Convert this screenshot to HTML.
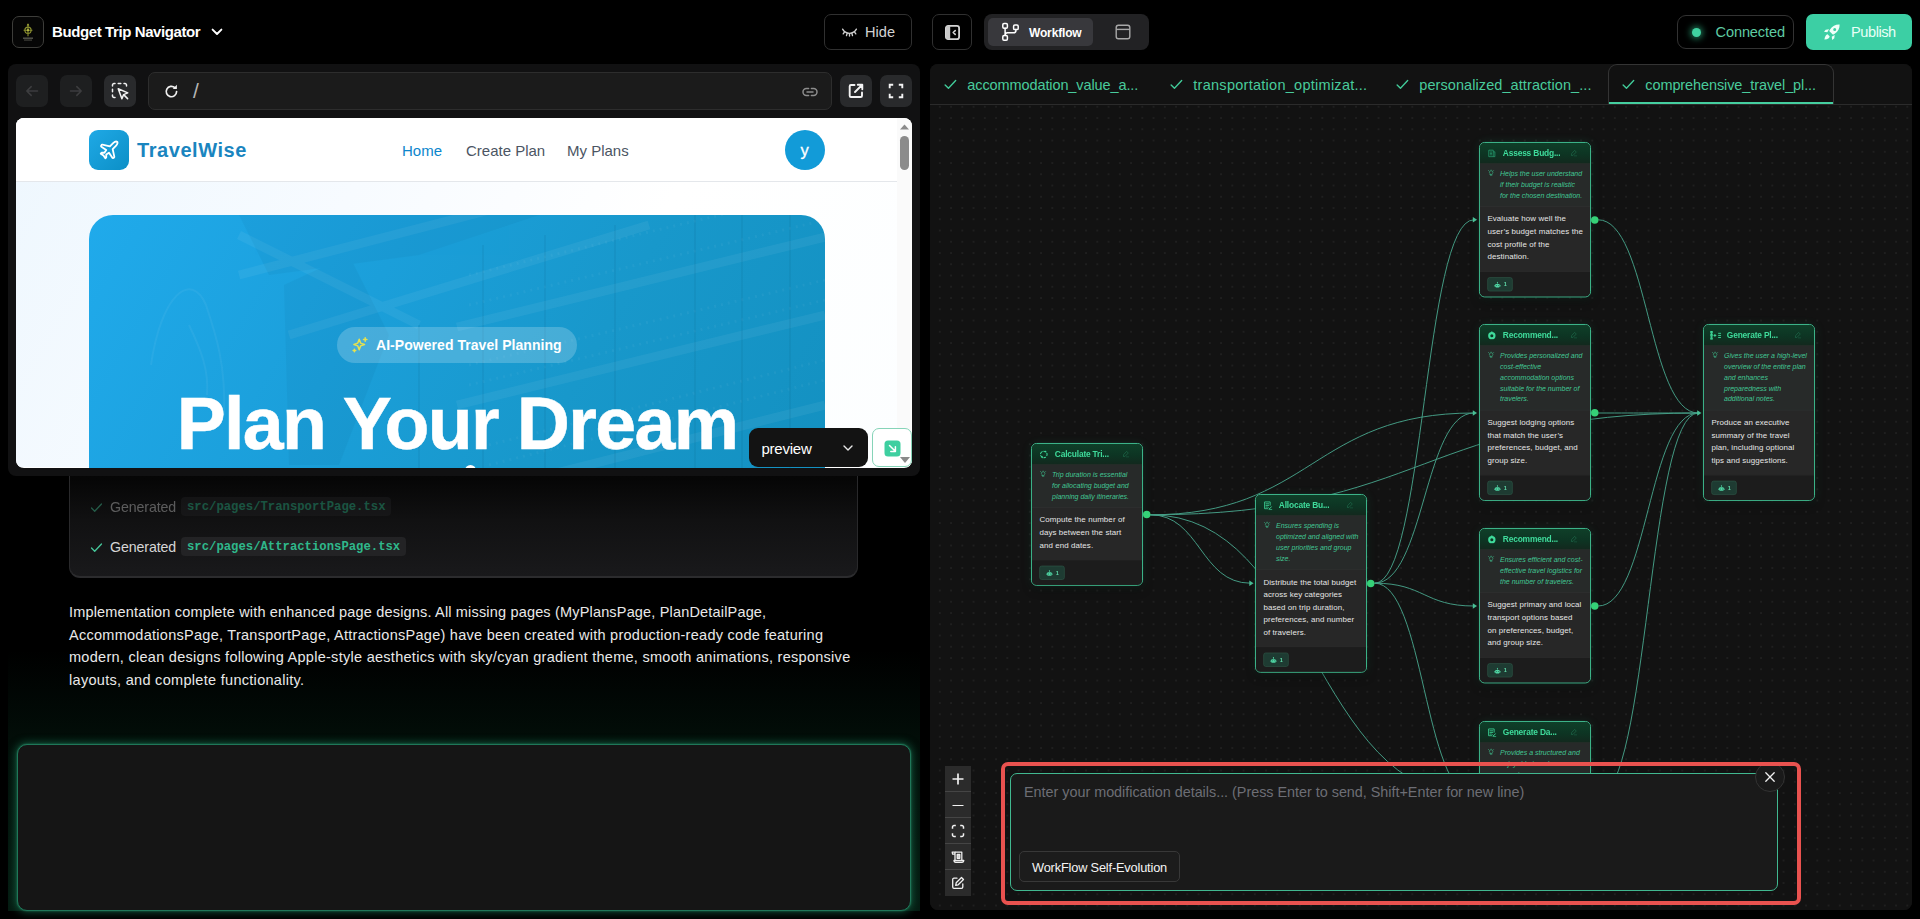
<!DOCTYPE html>
<html lang="en">
<head>
<meta charset="utf-8">
<title>Budget Trip Navigator</title>
<style>
*{box-sizing:border-box;margin:0;padding:0}
html,body{width:1920px;height:919px;overflow:hidden;background:#000;color:#fff;font-family:"Liberation Sans",sans-serif;}
body{position:relative}
.abs{position:absolute}
svg{display:block}
/* ---------- top bar ---------- */
.logo{left:12px;top:16px;width:32px;height:32px;border:1px solid #3d3d3a;border-radius:7px;background:#060606}
.title{left:52px;top:23px;font-size:15px;font-weight:700;line-height:17px;letter-spacing:-0.4px;color:#fff;white-space:nowrap}
.btn-o{border:1px solid #303030;border-radius:7px;background:#000}
.hide{left:824px;top:14px;width:88px;height:36px}
.hide span{position:absolute;left:40px;top:9px;font-size:14.6px;line-height:17px;color:#d2d2d2}
.toggle{left:932px;top:14px;width:40px;height:36px}
.seg{left:984px;top:14px;width:165px;height:36px;background:#222224;border-radius:8px}
.seg .act{position:absolute;left:4px;top:4px;width:105px;height:28px;background:#38383c;border-radius:5px}
.seg .act span{position:absolute;left:41px;top:7.700px;font-size:12px;font-weight:700;line-height:14px;color:#fff;letter-spacing:-0.16px}
.conn{left:1677px;top:15px;width:117px;height:34px;border:1px solid #323232;border-radius:9px;background:#000}
.conn i{position:absolute;left:14px;top:12px;width:9px;height:9px;border-radius:50%;background:#3fd2a0;box-shadow:0 0 6px 2px rgba(52,211,153,.55)}
.conn span{position:absolute;left:37.500px;top:8px;font-size:14.6px;line-height:17px;color:#5ecba3;letter-spacing:-.13px}
.pub{left:1806px;top:14px;width:106px;height:36px;border-radius:7px;background:#3ccfa4}
.pub span{position:absolute;left:45px;top:10px;font-size:14.6px;line-height:17px;color:#e9fff7;letter-spacing:-.44px}
/* ---------- left preview panel ---------- */
.lp{left:8px;top:64px;width:912px;height:412px;background:#111112;border-radius:8px;z-index:5}
.tb{top:11px;width:32px;height:32px;border-radius:7px;background:#1e1f20}
.tb.l{background:#292a2c}
.url{left:140px;top:8px;width:684px;height:38px;border:1px solid #2d2d2d;border-radius:7px;background:#1b1b1b}
.url span{position:absolute;left:44px;top:6px;font-size:21px;line-height:24px;color:#b4b4b4}
.frame{left:8px;top:54px;width:896px;height:349.500px;border-radius:8px;background:#fff;overflow:hidden}
/* ---------- chat area ---------- */
.chat{left:8px;top:476px;width:912px;height:435px;background:linear-gradient(180deg,#000 0%,#000 40%,#020d08 60%,#051c12 100%)}

/* ---------- site in frame ---------- */
.site{position:absolute;left:0;top:0;width:881px;height:349px;background:linear-gradient(120deg,#eef7fe 0%,#f7fbff 35%,#ffffff 65%,#fcfeff 100%);font-family:"Liberation Sans",sans-serif}
.nav{position:absolute;left:0;top:0;width:881px;height:64px;background:#fff;border-bottom:1px solid #e4e7eb}
.lg{position:absolute;left:72.500px;top:12px;width:40px;height:40px;border-radius:9px;background:linear-gradient(135deg,#1fa9e6,#0c8fc6)}
.brand{position:absolute;left:121px;top:21px;font-size:20px;font-weight:700;line-height:23px;letter-spacing:.56px;color:#1a85bf;white-space:nowrap}
.nl{position:absolute;top:23.500px;font-size:15px;line-height:17px;color:#4b5563;white-space:nowrap}
.av{position:absolute;left:768.500px;top:12px;width:40px;height:40px;border-radius:50%;background:#129bd8;color:#fff;font-weight:400;font-size:16.500px;line-height:40px;text-align:center;-webkit-text-stroke:.3px #fff}
.hero{position:absolute;left:73px;top:97px;width:736px;height:300px;border-radius:24px;overflow:hidden;background:linear-gradient(120deg,#20aaeb 0%,#1b9fda 36%,#1898cb 64%,#1390c0 100%)}
.pill{position:absolute;left:247.500px;top:112px;width:240.500px;height:36px;border-radius:18px;background:rgba(255,255,255,.2)}
.pill span{position:absolute;left:39.500px;top:10px;font-size:14px;font-weight:700;line-height:16px;color:#fff;white-space:nowrap;letter-spacing:.05px}
.h1{position:absolute;left:0;top:172px;width:736px;text-align:center;font-size:73.500px;font-weight:700;line-height:74px;color:#fff;white-space:nowrap;letter-spacing:-1.650px;-webkit-text-stroke:.5px #fff}
.sb{position:absolute;left:881px;top:0;width:15px;height:349px;background:#fafafa}
.sb i{position:absolute;left:3px;top:18px;width:9px;height:34px;border-radius:4.500px;background:#8b8b8b}
.pv{left:740.500px;top:364px;width:119px;height:39px;border-radius:9px;background:#131313}
.pv span{position:absolute;left:13px;top:11.500px;font-size:15px;line-height:18px;color:#fff;letter-spacing:-.24px}
.gb{left:864px;top:364px;width:40px;height:39px;border-radius:7px;background:#fff;border:1px solid #86d4b8}
/* ---------- chat ---------- */
.card{position:absolute;left:61px;top:-40px;width:789px;height:141.500px;border:1px solid #29292b;border-bottom:2px solid #2c2c2e;border-radius:11px;background:linear-gradient(180deg,#040404 0%,#060606 30%,#111112 60%,#19191b 100%)}
.row{position:absolute;left:20px;height:20px;white-space:nowrap}
.row .g{position:absolute;left:20px;top:1px;font-size:14.200px;line-height:17px;letter-spacing:-.1px}
.row code{position:absolute;left:91px;top:-1px;height:19px;padding:0 6px;border-radius:4px;background:#232325;font-family:"Liberation Mono",monospace;font-weight:700;font-size:12.250px;line-height:21.500px}
.para{position:absolute;left:61px;top:125px;font-size:14.500px;line-height:22.500px;color:#e9e9e9;white-space:nowrap}
.inp{position:absolute;left:8.500px;top:267.500px;width:894.500px;height:167px;border:1.500px solid #1f7759;border-radius:10px;background:#151515;box-shadow:0 0 9px 1px rgba(32,150,105,.55),0 0 2px rgba(60,200,150,.5)}
/* ---------- right panel ---------- */
.rp{left:930px;top:64px;width:982px;height:846px;background:#121212;border-radius:8px;overflow:hidden}
/* RPCSS-START */
.tabs{position:absolute;left:0;top:0;width:982px;height:41px;border-bottom:1px solid #2b2b2b;background:#121212}
.tab{position:absolute;top:0;height:40px;white-space:nowrap}
.tab span{position:absolute;left:37.300px;top:12.500px;font-size:14.500px;line-height:17px;color:#49cb9c;letter-spacing:-.1px}
.tab.on span{left:36.300px;top:11.500px}
.tab.on svg{left:13px;top:14px}
.tab svg{position:absolute;left:14px;top:15px}
.tab.on{border:1px solid #343434;border-bottom:0;border-radius:9px 9px 0 0;background:#111}
.tab.on:after{content:"";position:absolute;left:0;right:0;bottom:0;height:2.500px;background:#45cfa0}
.cv{position:absolute;left:0;top:41px;width:982px;height:805px;overflow:hidden;background-color:#121212;background-image:radial-gradient(circle,#1f1f1f 0.700px,rgba(31,31,31,0) 1.200px);background-size:11.250px 11.250px;background-position:4.200px 7.400px}
.nd{position:absolute;width:240px;transform-origin:0 0;transform:scale(0.4667);border:2px solid #41c596;border-radius:12px;background:#262626;box-shadow:0 0 18px rgba(61,207,155,.11),0 8px 20px rgba(0,0,0,.3);font-family:"Liberation Sans",sans-serif}
.nd .in{border-radius:10px;overflow:hidden}
.nh{position:relative;height:44px;background:linear-gradient(180deg,#0f3f29 0%,#0d3523 55%,#12291e 100%);border-bottom:1px solid #1d3a2c}
.nh b{position:absolute;left:49px;top:11px;font-size:18px;line-height:22px;font-weight:700;color:#3fdb9b;white-space:nowrap;letter-spacing:-.4px}
.nh svg.ic{position:absolute;left:16px;top:13px}
.nh svg.ed{position:absolute;left:194px;top:14px;opacity:.5}
.nr{position:relative;padding:10px 12px 11.700px 43px;background:#272a29;border-bottom:1px solid #343535;font-style:italic;font-size:15px;line-height:23.300px;color:#42c794;white-space:nowrap;letter-spacing:0}
.nr svg{position:absolute;left:17px;top:13px}
.nb{padding:12.700px 16px 17.300px 16px;background:#272727;font-size:17px;line-height:27px;color:#e6e6e6;white-space:nowrap;letter-spacing:.2px}
.nf{height:54px;background:#1c1c1c;border-top:1px solid #343434;position:relative}
.bd{position:absolute;left:16px;top:12px;width:54px;height:30px;border:1.500px solid #346553;border-radius:5px;background:#1e3b32}
.bd svg{position:absolute;left:13px;top:8px}
.bd span{position:absolute;left:34px;top:7px;font-size:12px;font-weight:700;line-height:14px;color:#5fd8a8}
.hd{position:absolute;right:-17.500px;width:16px;height:16px;border-radius:50%;background:#35d177}
.ctl{position:absolute;left:15.200px;top:661.300px;width:26px;background:#2b2b2b}
.ctl div{height:26px;border-bottom:1px solid #454545;position:relative}
.ctl div:last-child{border-bottom:0}
.ctl svg{position:absolute;left:6px;top:6px}
.hl{position:absolute;left:70.500px;top:698px;width:800.500px;height:142.500px;border:4.500px solid #e9524f;border-radius:7px}
.ta{position:absolute;left:80px;top:709px;width:768.300px;height:118px;border:1px solid #41b890;border-radius:7px;background:#1a1a1a}
.ta .ph{position:absolute;left:13px;top:10px;font-size:14.400px;line-height:17px;color:#6d6e75;white-space:nowrap;letter-spacing:-.02px}
.ta .wb{position:absolute;left:7.500px;top:76.500px;width:161.500px;height:31.500px;border:1px solid #383838;border-radius:5px;background:#1c1c1c}
.ta .wb span{position:absolute;left:12.500px;top:8px;font-size:12.800px;line-height:15px;color:#f4f4f4;white-space:nowrap;letter-spacing:-.18px}
.hl{z-index:3}
.cl{position:absolute;left:824.500px;top:698.200px;width:30px;height:30px;border-radius:50%;background:#1a1a1a;border:1px solid #333}
/* RPCSS-END */
</style>
</head>
<body>
<!-- TOPBAR -->
<div class="abs logo" id="logo"><svg width="30" height="30" viewBox="0 0 30 30" style="position:absolute;left:0;top:0">
<g fill="none" stroke="#8d9230" stroke-width="1.1"><circle cx="15" cy="13.2" r="3.1"/><path d="M15 7.2v12M10.6 13.2h8.8"/></g>
<path d="M15 6.2l1.3 2.4h-2.6z" fill="#a9ad3a"/><circle cx="15" cy="13.2" r="1.1" fill="#b9bd45"/>
<rect x="10" y="20.6" width="10" height="1.1" fill="#6d6d62"/><rect x="11" y="22.6" width="8" height="0.9" fill="#55554c"/></svg></div>
<div class="abs title">Budget Trip Navigator</div>
<svg class="abs" style="left:211px;top:26px" width="12" height="12" viewBox="0 0 12 12"><path d="M1.6 3.6L6 8l4.4-4.4" fill="none" stroke="#fff" stroke-width="1.9" stroke-linecap="round" stroke-linejoin="round"/></svg>
<div class="abs btn-o hide"><svg style="position:absolute;left:16px;top:11px" width="17" height="14" viewBox="0 0 17 14"><g fill="none" stroke="#d0d0d0" stroke-width="1.35" stroke-linecap="round"><path d="M1.6 3.2C3.2 6 5.6 7.3 8.5 7.3s5.3-1.3 6.9-4.1"/><path d="M3.4 6.1L2.2 7.9M6.1 7.5l-.6 2.1M10.9 7.5l.6 2.1M13.6 6.1l1.2 1.8M8.5 7.8v2.2"/></g></svg><span>Hide</span></div>
<div class="abs btn-o toggle"><svg style="position:absolute;left:11px;top:9px" width="17" height="17" viewBox="0 0 17 17"><rect x="1.9" y="1.9" width="13.2" height="13.2" rx="2.2" fill="none" stroke="#d4d4d4" stroke-width="1.8"/><path d="M2 3.5a1.6 1.6 0 0 1 1.6-1.6H6.2v13.2H3.6A1.6 1.6 0 0 1 2 13.5z" fill="#c9c9c9"/><path d="M11.2 6.6L9.2 8.5l2 1.9" fill="none" stroke="#d4d4d4" stroke-width="1.6" stroke-linecap="round" stroke-linejoin="round"/></svg></div>
<div class="abs seg"><div class="act"><svg style="position:absolute;left:13px;top:4px" width="20" height="20" viewBox="0 0 20 20"><g fill="none" stroke="#fff" stroke-width="1.5" stroke-linejoin="round"><rect x="1.8" y="1.6" width="4.6" height="4.6" rx="1.2"/><rect x="1.8" y="13.6" width="4.6" height="4.6" rx="1.2"/><rect x="12.6" y="3" width="4.6" height="4.6" rx="1.2"/><path d="M4.1 6.2v7.4M14.9 7.6v.8a2.4 2.4 0 0 1-2.4 2.4H6.5a2.4 2.4 0 0 0-2.4 2.4" stroke-linecap="round"/></g></svg><span>Workflow</span></div>
<svg style="position:absolute;left:130px;top:9px" width="18" height="18" viewBox="0 0 18 18"><g fill="none" stroke="#a8a8a8" stroke-width="1.4"><rect x="2.2" y="2.2" width="13.6" height="13.6" rx="2.2"/><path d="M2.2 6.4h13.6"/></g></svg></div>
<div class="abs conn"><i></i><span>Connected</span></div>
<div class="abs pub"><svg style="position:absolute;left:17px;top:9px" width="18" height="18" viewBox="0 0 18 18"><g fill="#effff9"><path d="M16.6 1.4c-3.9-.2-7.3 1.5-9.4 4.9l-1 1.7 3.8 3.8 1.7-1c3.4-2.1 5.1-5.500 4.900-9.400zM11.700 7.900a1.500 1.500 0 1 1 0-3 1.500 1.500 0 0 1 0 3z"/><path d="M6.100 6.300L2.700 6.700 1 8.800l3.300.5zM11.700 11.900l-.4 3.400-2.100 1.700-.5-3.300z"/><path d="M4.600 11.300c-1.500.3-2.600 1.600-3.200 5.300 3.700-.6 5-1.700 5.300-3.200z"/></g></svg><span>Publish</span></div>

<!-- CHAT (behind) -->
<div class="abs chat" id="chat">
  <div class="card">
    <div class="row" style="top:61px;opacity:.42"><svg style="position:absolute;left:0;top:3px" width="13" height="13" viewBox="0 0 13 13"><path d="M1.500 7l3.200 3.200L11.500 3" fill="none" stroke="#46c79a" stroke-width="1.300" stroke-linecap="round" stroke-linejoin="round"/></svg><span class="g" style="color:#c9c9c9">Generated</span><code style="color:#2fb88b">src/pages/TransportPage.tsx</code></div>
    <div class="row" style="top:101px"><svg style="position:absolute;left:0;top:3px" width="13" height="13" viewBox="0 0 13 13"><path d="M1.500 7l3.200 3.200L11.500 3" fill="none" stroke="#46c79a" stroke-width="1.300" stroke-linecap="round" stroke-linejoin="round"/></svg><span class="g" style="color:#d6d6d6">Generated</span><code style="color:#2fb88b">src/pages/AttractionsPage.tsx</code></div>
  </div>
  <div class="para"><span style="letter-spacing:.172px">Implementation complete with enhanced page designs. All missing pages (MyPlansPage, PlanDetailPage,</span><br><span style="letter-spacing:.272px">AccommodationsPage, TransportPage, AttractionsPage) have been created with production-ready code featuring</span><br><span style="letter-spacing:.28px">modern, clean designs following Apple-style aesthetics with sky/cyan gradient theme, smooth animations, responsive</span><br><span style="letter-spacing:.3px">layouts, and complete functionality.</span></div>
  <div class="inp"></div>
</div>

<!-- LEFT PREVIEW PANEL -->
<div class="abs lp" id="lp">
  <div class="abs tb" style="left:8px"><svg style="position:absolute;left:8px;top:8px" width="16" height="16" viewBox="0 0 16 16"><path d="M13.500 8H3M7.200 3.600L2.800 8l4.400 4.400" fill="none" stroke="#3d3d3f" stroke-width="1.5" stroke-linecap="round" stroke-linejoin="round"/></svg></div>
  <div class="abs tb" style="left:52px"><svg style="position:absolute;left:8px;top:8px" width="16" height="16" viewBox="0 0 16 16"><path d="M2.500 8H13M8.800 3.600L13.200 8l-4.400 4.400" fill="none" stroke="#3d3d3f" stroke-width="1.500" stroke-linecap="round" stroke-linejoin="round"/></svg></div>
  <div class="abs tb l" style="left:96px"><svg style="position:absolute;left:7px;top:7px" width="19" height="19" viewBox="0 0 19 19"><g fill="none" stroke="#f2f2f2" stroke-width="1.5" stroke-linecap="round" stroke-linejoin="round"><path d="M4 1.500H3a1.500 1.500 0 0 0-1.500 1.500v1M7.200 1.500h2.600M13 1.500h1a1.500 1.500 0 0 1 1.500 1.500v1M1.500 7.200v2.600M1.500 13v1a1.500 1.500 0 0 0 1.500 1.500h1"/><path d="M7.200 6.800l3.700 10 1.700-4.200 4.200-1.700z"/><path d="M12.900 12.900l3.700 3.700"/></g></svg></div>
  <div class="abs url"><svg style="position:absolute;left:14px;top:10px" width="17" height="17" viewBox="0 0 17 17"><g fill="none" stroke="#f0f0f0" stroke-width="1.700" stroke-linecap="round" stroke-linejoin="round"><path d="M13.600 8.600a5.200 5.200 0 1 1-1.700-3.900"/></g><path d="M13.900 1.800v4.200H9.700z" fill="#f0f0f0"/></svg><span>/</span>
<svg style="position:absolute;left:652px;top:10px" width="18" height="18" viewBox="0 0 18 18"><g fill="none" stroke="#8d8d8d" stroke-width="1.500" stroke-linecap="round"><path d="M7.600 12.400H5.400a3.400 3.400 0 0 1 0-6.800h2.200M10.400 5.600h2.200a3.400 3.400 0 0 1 0 6.800h-2.200M6 9h6"/></g></svg></div>
  <div class="abs tb l" style="left:832px"><svg style="position:absolute;left:7px;top:7px" width="18" height="18" viewBox="0 0 18 18"><g fill="none" stroke="#f4f4f4" stroke-width="1.9" stroke-linecap="round" stroke-linejoin="round"><path d="M7.500 3H4a1.300 1.300 0 0 0-1.300 1.300v9.400A1.300 1.300 0 0 0 4 15h9.700a1.300 1.300 0 0 0 1.300-1.300V10.500"/><path d="M10.800 2.700h4.500v4.500M15 3L8 10"/></g></svg></div>
  <div class="abs tb l" style="left:872px"><svg style="position:absolute;left:8px;top:8px" width="16" height="16" viewBox="0 0 16 16"><path d="M1.700 5.200V1.700h3.500M10.800 1.700h3.500v3.500M14.300 10.800v3.500h-3.500M5.200 14.300H1.700v-3.500" fill="none" stroke="#f4f4f4" stroke-width="1.900" stroke-linejoin="miter"/></svg></div>
  <div class="abs frame" id="frame">
    <div class="site">
      <div class="hero">
        <svg width="736" height="300" viewBox="0 0 736 300" style="position:absolute;left:0;top:0">
          <g stroke="#fff" fill="none" opacity=".055" stroke-width="9"><path d="M150 60L420 -10M200 120L560 10M368 112L736 22M368 190L736 100M420 270L736 190M150 20L330 110"/></g>
          <g stroke="#fff" fill="none" opacity=".045" stroke-width="3" stroke-dasharray="2 5"><path d="M380 60L736 -25M380 90L736 5M380 150L736 65M380 170L736 85M400 230L736 145M400 250L736 165"/></g>
          <g stroke="#05405f" fill="none" opacity=".09" stroke-width="1.500"><path d="M394 30V300M456 20V300M526 10V300M606 0V300M653 0V300M701 0V300M330 110V300"/></g>
          <g fill="#05405f" opacity=".05"><path d="M195 70L260 40L300 120L250 250H200z"/><path d="M150 0h300L330 40L180 60z"/></g>
          <g stroke="#fff" fill="none" opacity=".05" stroke-width="2"><path d="M62 150c10-70 40-95 55-60c10 30 20 60 18 110M100 110c12 25 20 45 18 70"/></g>
        </svg>
        <div class="pill"><svg style="position:absolute;left:14px;top:9px" width="18" height="18" viewBox="0 0 18 18"><g fill="none" stroke="#e6e14f" stroke-width="1.500" stroke-linejoin="round" stroke-linecap="round"><path d="M8.200 3.200l1.400 3.900 3.900 1.400-3.900 1.400-1.400 3.900-1.400-3.900L2.900 8.500l3.900-1.400z"/><path d="M14.200 1.800v3.400M12.500 3.500h3.400M3.400 13.200v2.600M2.100 14.500h2.600"/></g></svg><span>AI-Powered Travel Planning</span></div>
        <div class="h1">Plan Your Dream</div>
        <i style="position:absolute;left:376px;top:250px;width:11px;height:11px;border-radius:50%;background:#fff"></i>
      </div>
      <div class="nav">
        <div class="lg"><svg style="position:absolute;left:9px;top:9px" width="22" height="22" viewBox="0 0 24 24"><path d="M17.800 19.200L16 11l3.500-3.500C21 6 21.500 4 21 3c-1-.5-3 0-4.500 1.500L13 8 4.800 6.200c-.5-.1-.9.100-1.100.5l-.3.500c-.2.500-.1 1 .3 1.300L9 12l-2 3H4l-1 1 3 2 2 3 1-1v-3l3-2 3.500 5.300c.3.400.8.500 1.300.3l.5-.2c.4-.300.600-.700.500-1.200z" fill="none" stroke="#fff" stroke-width="2" stroke-linejoin="round" stroke-linecap="round"/></svg></div>
        <div class="brand">TravelWise</div>
        <div class="nl" style="left:386px;color:#0c86cc">Home</div>
        <div class="nl" style="left:450px">Create Plan</div>
        <div class="nl" style="left:551px">My Plans</div>
        <div class="av">y</div>
      </div>
    </div>
    <div class="sb"><svg style="position:absolute;left:3px;top:5.500px" width="9" height="6" viewBox="0 0 9 6"><path d="M0 5.500L4.500.5 9 5.500z" fill="#8a8a8a"/></svg><i></i></div>
  </div>
  <div class="abs pv"><span>preview</span><svg style="position:absolute;left:93px;top:14px" width="12" height="12" viewBox="0 0 12 12"><path d="M2 4l4 4 4-4" fill="none" stroke="#e8e8e8" stroke-width="1.400" stroke-linecap="round" stroke-linejoin="round"/></svg></div>
  <div class="abs gb"><svg style="position:absolute;left:11px;top:11px" width="17" height="17" viewBox="0 0 17 17"><rect x=".500" y=".500" width="16" height="16" rx="3.500" fill="#3ecfa0"/><path d="M5.500 5.500l5.800 5.800M11.400 6.800v4.600H6.800" fill="none" stroke="#fff" stroke-width="1.500" stroke-linecap="round" stroke-linejoin="round"/></svg><svg style="position:absolute;left:27px;top:28px" width="10" height="6" viewBox="0 0 10 6"><path d="M0 0h10L5 6z" fill="#8a8a8a"/></svg></div>
</div>

<!-- RIGHT PANEL -->
<!-- RP-START -->
<div class="abs rp" id="rp">
<div class="tabs">
<div class="tab" style="left:0px;width:226px"><svg width="13" height="11.100" viewBox="0 0 14 12"><path d="M1.200 6.400l3.600 3.600L12.600 1.700" fill="none" stroke="#41c998" stroke-width="1.500" stroke-linecap="round" stroke-linejoin="round"/></svg><span style="letter-spacing:-0.1px">accommodation_value_a...</span></div>
<div class="tab" style="left:226px;width:226px"><svg width="13" height="11.100" viewBox="0 0 14 12"><path d="M1.200 6.400l3.600 3.600L12.600 1.700" fill="none" stroke="#41c998" stroke-width="1.500" stroke-linecap="round" stroke-linejoin="round"/></svg><span style="letter-spacing:0.27px">transportation_optimizat...</span></div>
<div class="tab" style="left:452px;width:226px"><svg width="13" height="11.100" viewBox="0 0 14 12"><path d="M1.200 6.400l3.600 3.600L12.600 1.700" fill="none" stroke="#41c998" stroke-width="1.500" stroke-linecap="round" stroke-linejoin="round"/></svg><span style="letter-spacing:0.08px">personalized_attraction_...</span></div>
<div class="tab on" style="left:678px;width:226px"><svg width="13" height="11.100" viewBox="0 0 14 12"><path d="M1.200 6.400l3.600 3.600L12.600 1.700" fill="none" stroke="#41c998" stroke-width="1.500" stroke-linecap="round" stroke-linejoin="round"/></svg><span style="letter-spacing:-0.1px">comprehensive_travel_pl...</span></div>
</div>
<div class="cv"><svg width="982" height="805" viewBox="930 105 982 805" style="position:absolute;left:0;top:0"><g fill="none" stroke="#46a088" stroke-width=".95"><path d="M1150.3 514.8C1200.3 514.8 1200.3 583.2 1250.4 583.2"/><path d="M1150.3 514.8C1312.1 514.8 1312.1 413.0 1473.9 413.0"/><path d="M1150.3 514.8C1424.3 514.8 1424.3 413.0 1698.3 413.0"/><path d="M1150.3 514.8C1312.1 514.8 1312.1 796.0 1473.9 796.0"/><path d="M1374.6 583.2C1424.2 583.2 1424.2 219.8 1473.9 219.8"/><path d="M1374.6 583.2C1424.2 583.2 1424.2 413.0 1473.9 413.0"/><path d="M1374.6 583.2C1424.2 583.2 1424.2 606.0 1473.9 606.0"/><path d="M1374.6 583.2C1424.2 583.2 1424.2 796.0 1473.9 796.0"/><path d="M1598.1 219.8C1648.2 219.8 1648.2 413.0 1698.3 413.0"/><path d="M1598.1 413.0C1648.2 413.0 1648.2 413.0 1698.3 413.0"/><path d="M1598.1 606.0C1648.2 606.0 1648.2 413.0 1698.3 413.0"/><path d="M1598.1 796.0C1648.2 796.0 1648.2 413.0 1698.3 413.0"/></g><g fill="#4cc79c"><path d="M1253.6 583.2l-4.300 -2.700v5.400z"/><path d="M1477.1 413.0l-4.300 -2.700v5.400z"/><path d="M1701.5 413.0l-4.300 -2.700v5.400z"/><path d="M1477.1 796.0l-4.300 -2.700v5.400z"/><path d="M1477.1 219.8l-4.300 -2.700v5.400z"/><path d="M1477.1 606.0l-4.300 -2.700v5.400z"/></g></svg><div class="nd" style="left:101.1px;top:338.3px"><div class="in"><div class="nh"><svg class="ic" width="19" height="19" viewBox="0 0 19 19"><g fill="none" stroke="#3fdb9b" stroke-width="2.200" stroke-linecap="round"><path d="M9.500 2.500a7 7 0 0 1 3.500 1M16 7a7 7 0 0 1 0 5M13 15.500a7 7 0 0 1-3.500 1M6 15.500a7 7 0 0 1-3-3.500M2.500 8a7 7 0 0 1 3.500-4.500"/></g><path d="M12 1l4 3.500-4.500 1z" fill="#3fdb9b"/><path d="M7 18l-4-3.500 4.500-1z" fill="#3fdb9b"/></svg><b>Calculate Tri...</b><svg class="ed" width="15" height="15" viewBox="0 0 15 15"><g fill="none" stroke="#2f9f73" stroke-width="1.500" stroke-linecap="round" stroke-linejoin="round"><path d="M9.500 2.500l3 3L5.500 12.500l-3.700.7.700-3.700z"/><path d="M8 14h5.500"/></g></svg></div><div class="nr"><svg width="14" height="14" viewBox="0 0 14 14"><g fill="none" stroke="#42c794" stroke-width="1.200" stroke-linecap="round"><path d="M4.800 9.200C3.800 8.500 3.200 7.500 3.200 6.300a3.800 3.800 0 0 1 7.600 0c0 1.200-.6 2.200-1.600 2.900v1.300H4.800zM5.400 12.300h3.200"/><path d="M7 .4v.9M1.300 2l.7.700M12.700 2l-.7.700"/></g></svg>Trip duration is essential<br>for allocating budget and<br>planning daily itineraries.</div><div class="nb">Compute the number of<br>days between the start<br>and end dates.</div><div class="nf"><div class="bd"><svg width="15" height="14" viewBox="0 0 15 14"><g fill="#4fd6a4"><rect x="2.500" y="5" width="10" height="7.500" rx="2.200"/><rect x="6.900" y="1.500" width="1.200" height="3.500"/><circle cx="7.500" cy="1.600" r="1.200"/><rect x=".5" y="7.500" width="1.300" height="3" rx=".6"/><rect x="13.200" y="7.500" width="1.300" height="3" rx=".6"/></g><circle cx="5.600" cy="8.500" r="1" fill="#1e3b32"/><circle cx="9.400" cy="8.500" r="1" fill="#1e3b32"/></svg><span>1</span></div></div></div><i class="hd" style="top:143.3px"></i></div><div class="nd" style="left:325.4px;top:388.6px"><div class="in"><div class="nh"><svg class="ic" width="20" height="20" viewBox="0 0 20 20"><g fill="none" stroke="#3fdb9b" stroke-width="1.700" stroke-linejoin="round" stroke-linecap="round"><path d="M14.500 9V2H2.500v14.500h7"/><path d="M5.500 6h6M5.500 9.500h6M5.500 13h3"/><path d="M11.500 14.500l2 2 3.500-4" stroke-width="2"/><path d="M12 18.500h6" stroke-width="1.500"/></g></svg><b>Allocate Bu...</b><svg class="ed" width="15" height="15" viewBox="0 0 15 15"><g fill="none" stroke="#2f9f73" stroke-width="1.500" stroke-linecap="round" stroke-linejoin="round"><path d="M9.500 2.500l3 3L5.500 12.500l-3.700.7.700-3.700z"/><path d="M8 14h5.500"/></g></svg></div><div class="nr"><svg width="14" height="14" viewBox="0 0 14 14"><g fill="none" stroke="#42c794" stroke-width="1.200" stroke-linecap="round"><path d="M4.800 9.200C3.800 8.500 3.200 7.500 3.200 6.300a3.800 3.800 0 0 1 7.600 0c0 1.200-.6 2.200-1.600 2.900v1.300H4.800zM5.400 12.300h3.200"/><path d="M7 .4v.9M1.300 2l.7.700M12.700 2l-.7.700"/></g></svg>Ensures spending is<br>optimized and aligned with<br>user priorities and group<br>size.</div><div class="nb">Distribute the total budget<br>across key categories<br>based on trip duration,<br>preferences, and number<br>of travelers.</div><div class="nf"><div class="bd"><svg width="15" height="14" viewBox="0 0 15 14"><g fill="#4fd6a4"><rect x="2.500" y="5" width="10" height="7.500" rx="2.200"/><rect x="6.900" y="1.500" width="1.200" height="3.500"/><circle cx="7.500" cy="1.600" r="1.200"/><rect x=".5" y="7.500" width="1.300" height="3" rx=".6"/><rect x="13.200" y="7.500" width="1.300" height="3" rx=".6"/></g><circle cx="5.600" cy="8.500" r="1" fill="#1e3b32"/><circle cx="9.400" cy="8.500" r="1" fill="#1e3b32"/></svg><span>1</span></div></div></div><i class="hd" style="top:181.9px"></i></div><div class="nd" style="left:548.9px;top:37.0px"><div class="in"><div class="nh"><svg class="ic" width="19" height="19" viewBox="0 0 19 19"><g fill="none" stroke="#2aa878" stroke-width="1.500" stroke-linejoin="round"><path d="M3 2.500h9.500v14H3z"/><path d="M12.500 6h3.500v10.500h-3.500M5.500 6.500h4.500M5.500 9.500h4.500M5.500 12.500h4.500"/></g></svg><b>Assess Budg...</b><svg class="ed" width="15" height="15" viewBox="0 0 15 15"><g fill="none" stroke="#2f9f73" stroke-width="1.500" stroke-linecap="round" stroke-linejoin="round"><path d="M9.500 2.500l3 3L5.500 12.500l-3.700.7.700-3.700z"/><path d="M8 14h5.500"/></g></svg></div><div class="nr"><svg width="14" height="14" viewBox="0 0 14 14"><g fill="none" stroke="#42c794" stroke-width="1.200" stroke-linecap="round"><path d="M4.800 9.200C3.800 8.500 3.200 7.500 3.200 6.300a3.800 3.800 0 0 1 7.600 0c0 1.200-.6 2.200-1.600 2.900v1.300H4.800zM5.400 12.300h3.200"/><path d="M7 .4v.9M1.300 2l.7.700M12.700 2l-.7.700"/></g></svg>Helps the user understand<br>if their budget is realistic<br>for the chosen destination.</div><div class="nb">Evaluate how well the<br>user’s budget matches the<br>cost profile of the<br>destination.</div><div class="nf"><div class="bd"><svg width="15" height="14" viewBox="0 0 15 14"><g fill="#4fd6a4"><rect x="2.500" y="5" width="10" height="7.500" rx="2.200"/><rect x="6.900" y="1.500" width="1.200" height="3.500"/><circle cx="7.500" cy="1.600" r="1.200"/><rect x=".5" y="7.500" width="1.300" height="3" rx=".6"/><rect x="13.200" y="7.500" width="1.300" height="3" rx=".6"/></g><circle cx="5.600" cy="8.500" r="1" fill="#1e3b32"/><circle cx="9.400" cy="8.500" r="1" fill="#1e3b32"/></svg><span>1</span></div></div></div><i class="hd" style="top:156.8px"></i></div><div class="nd" style="left:548.9px;top:219.3px"><div class="in"><div class="nh"><svg class="ic" width="19" height="19" viewBox="0 0 19 19"><circle cx="9.500" cy="10" r="5.600" fill="none" stroke="#3fdb9b" stroke-width="4.600"/><rect x="8.300" y=".8" width="2.400" height="3.500" fill="#3fdb9b"/></svg><b>Recommend...</b><svg class="ed" width="15" height="15" viewBox="0 0 15 15"><g fill="none" stroke="#2f9f73" stroke-width="1.500" stroke-linecap="round" stroke-linejoin="round"><path d="M9.500 2.500l3 3L5.500 12.500l-3.700.7.700-3.700z"/><path d="M8 14h5.500"/></g></svg></div><div class="nr"><svg width="14" height="14" viewBox="0 0 14 14"><g fill="none" stroke="#42c794" stroke-width="1.200" stroke-linecap="round"><path d="M4.800 9.200C3.800 8.500 3.200 7.500 3.200 6.300a3.800 3.800 0 0 1 7.600 0c0 1.200-.6 2.200-1.600 2.900v1.300H4.800zM5.400 12.300h3.200"/><path d="M7 .4v.9M1.300 2l.7.700M12.700 2l-.7.700"/></g></svg>Provides personalized and<br>cost-effective<br>accommodation options<br>suitable for the number of<br>travelers.</div><div class="nb">Suggest lodging options<br>that match the user’s<br>preferences, budget, and<br>group size.</div><div class="nf"><div class="bd"><svg width="15" height="14" viewBox="0 0 15 14"><g fill="#4fd6a4"><rect x="2.500" y="5" width="10" height="7.500" rx="2.200"/><rect x="6.900" y="1.500" width="1.200" height="3.500"/><circle cx="7.500" cy="1.600" r="1.200"/><rect x=".5" y="7.500" width="1.300" height="3" rx=".6"/><rect x="13.200" y="7.500" width="1.300" height="3" rx=".6"/></g><circle cx="5.600" cy="8.500" r="1" fill="#1e3b32"/><circle cx="9.400" cy="8.500" r="1" fill="#1e3b32"/></svg><span>1</span></div></div></div><i class="hd" style="top:180.1px"></i></div><div class="nd" style="left:548.9px;top:423.2px"><div class="in"><div class="nh"><svg class="ic" width="19" height="19" viewBox="0 0 19 19"><circle cx="9.500" cy="10" r="5.600" fill="none" stroke="#3fdb9b" stroke-width="4.600"/><rect x="8.300" y=".8" width="2.400" height="3.500" fill="#3fdb9b"/></svg><b>Recommend...</b><svg class="ed" width="15" height="15" viewBox="0 0 15 15"><g fill="none" stroke="#2f9f73" stroke-width="1.500" stroke-linecap="round" stroke-linejoin="round"><path d="M9.500 2.500l3 3L5.500 12.500l-3.700.7.700-3.700z"/><path d="M8 14h5.500"/></g></svg></div><div class="nr"><svg width="14" height="14" viewBox="0 0 14 14"><g fill="none" stroke="#42c794" stroke-width="1.200" stroke-linecap="round"><path d="M4.800 9.200C3.800 8.500 3.200 7.500 3.200 6.300a3.800 3.800 0 0 1 7.600 0c0 1.200-.6 2.200-1.600 2.900v1.300H4.800zM5.400 12.300h3.200"/><path d="M7 .4v.9M1.300 2l.7.700M12.700 2l-.7.700"/></g></svg>Ensures efficient and cost-<br>effective travel logistics for<br>the number of travelers.</div><div class="nb">Suggest primary and local<br>transport options based<br>on preferences, budget,<br>and group size.</div><div class="nf"><div class="bd"><svg width="15" height="14" viewBox="0 0 15 14"><g fill="#4fd6a4"><rect x="2.500" y="5" width="10" height="7.500" rx="2.200"/><rect x="6.900" y="1.500" width="1.200" height="3.500"/><circle cx="7.500" cy="1.600" r="1.200"/><rect x=".5" y="7.500" width="1.300" height="3" rx=".6"/><rect x="13.200" y="7.500" width="1.300" height="3" rx=".6"/></g><circle cx="5.600" cy="8.500" r="1" fill="#1e3b32"/><circle cx="9.400" cy="8.500" r="1" fill="#1e3b32"/></svg><span>1</span></div></div></div><i class="hd" style="top:156.8px"></i></div><div class="nd" style="left:548.9px;top:615.8px"><div class="in"><div class="nh"><svg class="ic" width="20" height="20" viewBox="0 0 20 20"><g fill="none" stroke="#3fdb9b" stroke-width="1.700" stroke-linejoin="round" stroke-linecap="round"><path d="M14.500 9V2H2.500v14.500h7"/><path d="M5.500 6h6M5.500 9.500h6M5.500 13h3"/><path d="M11.500 14.500l2 2 3.500-4" stroke-width="2"/><path d="M12 18.500h6" stroke-width="1.500"/></g></svg><b>Generate Da...</b><svg class="ed" width="15" height="15" viewBox="0 0 15 15"><g fill="none" stroke="#2f9f73" stroke-width="1.500" stroke-linecap="round" stroke-linejoin="round"><path d="M9.500 2.500l3 3L5.500 12.500l-3.700.7.700-3.700z"/><path d="M8 14h5.500"/></g></svg></div><div class="nr"><svg width="14" height="14" viewBox="0 0 14 14"><g fill="none" stroke="#42c794" stroke-width="1.200" stroke-linecap="round"><path d="M4.800 9.200C3.800 8.500 3.200 7.500 3.200 6.300a3.800 3.800 0 0 1 7.600 0c0 1.200-.6 2.200-1.600 2.900v1.300H4.800zM5.400 12.300h3.200"/><path d="M7 .4v.9M1.300 2l.7.700M12.700 2l-.7.700"/></g></svg>Provides a structured and<br>enjoyable travel<br>experience.</div><div class="nb">Create a detailed day-by-<br>day itinerary covering<br>activities, meals, and<br>travel times.</div><div class="nf"><div class="bd"><svg width="15" height="14" viewBox="0 0 15 14"><g fill="#4fd6a4"><rect x="2.500" y="5" width="10" height="7.500" rx="2.200"/><rect x="6.900" y="1.500" width="1.200" height="3.500"/><circle cx="7.500" cy="1.600" r="1.200"/><rect x=".5" y="7.500" width="1.300" height="3" rx=".6"/><rect x="13.200" y="7.500" width="1.300" height="3" rx=".6"/></g><circle cx="5.600" cy="8.500" r="1" fill="#1e3b32"/><circle cx="9.400" cy="8.500" r="1" fill="#1e3b32"/></svg><span>1</span></div></div></div><i class="hd" style="top:156.8px"></i></div><div class="nd" style="left:773.3px;top:219.3px"><div class="in"><div class="nh"><svg class="ic" style="left:13px" width="26" height="19" viewBox="0 0 26 19"><g fill="none" stroke="#3fdb9b" stroke-width="1.700"><rect x="1.500" y="1" width="3.500" height="3.500"/><rect x="1.500" y="7.700" width="3.500" height="3.500"/><rect x="1.500" y="14.500" width="3.500" height="3.500"/><path d="M3.200 4.500v3.200M3.200 11.200v3.300M7.500 9.500h6M10.500 6.500v6M17.500 5h6M17.500 9.500h6M17.500 14h6" stroke-width="2"/></g></svg><b>Generate Pl...</b><svg class="ed" width="15" height="15" viewBox="0 0 15 15"><g fill="none" stroke="#2f9f73" stroke-width="1.500" stroke-linecap="round" stroke-linejoin="round"><path d="M9.500 2.500l3 3L5.500 12.500l-3.700.7.700-3.700z"/><path d="M8 14h5.500"/></g></svg></div><div class="nr"><svg width="14" height="14" viewBox="0 0 14 14"><g fill="none" stroke="#42c794" stroke-width="1.200" stroke-linecap="round"><path d="M4.800 9.200C3.800 8.500 3.200 7.500 3.200 6.300a3.800 3.800 0 0 1 7.600 0c0 1.200-.6 2.200-1.600 2.900v1.300H4.800zM5.400 12.300h3.200"/><path d="M7 .4v.9M1.300 2l.7.700M12.700 2l-.7.700"/></g></svg>Gives the user a high-level<br>overview of the entire plan<br>and enhances<br>preparedness with<br>additional notes.</div><div class="nb">Produce an executive<br>summary of the travel<br>plan, including optional<br>tips and suggestions.</div><div class="nf"><div class="bd"><svg width="15" height="14" viewBox="0 0 15 14"><g fill="#4fd6a4"><rect x="2.500" y="5" width="10" height="7.500" rx="2.200"/><rect x="6.900" y="1.500" width="1.200" height="3.500"/><circle cx="7.500" cy="1.600" r="1.200"/><rect x=".5" y="7.500" width="1.300" height="3" rx=".6"/><rect x="13.200" y="7.500" width="1.300" height="3" rx=".6"/></g><circle cx="5.600" cy="8.500" r="1" fill="#1e3b32"/><circle cx="9.400" cy="8.500" r="1" fill="#1e3b32"/></svg><span>1</span></div></div></div></div><div class="ctl"><div><svg width="14" height="14" viewBox="0 0 14 14"><path d="M7 1.500v11M1.500 7h11" stroke="#f2f2f2" stroke-width="1.700" fill="none"/></svg></div><div><svg width="14" height="14" viewBox="0 0 14 14"><path d="M1.500 7.500h11" stroke="#f2f2f2" stroke-width="1" fill="none"/></svg></div><div><svg width="14" height="14" viewBox="0 0 14 14"><path d="M1.500 4.800V3a1.500 1.500 0 0 1 1.500-1.500h1.800M9.200 1.500H11A1.500 1.500 0 0 1 12.500 3v1.800M12.500 9.200V11a1.500 1.500 0 0 1-1.500 1.500H9.200M4.800 12.500H3A1.500 1.500 0 0 1 1.500 11V9.200" stroke="#f2f2f2" stroke-width="1.500" fill="none"/></svg></div><div><svg width="14" height="14" viewBox="0 0 14 14"><g fill="none" stroke="#eee" stroke-width="1.300" stroke-linejoin="round"><path d="M4 2.200h6.800v8.600"/><path d="M4 2.200v8.300M1.200 2.200H4l-.2 2H1.600z"/><path d="M3 10.500h9.800c0 1.200-.6 1.800-1.600 1.800H4.600c-1 0-1.600-.6-1.600-1.800z"/><path d="M6.200 4.500h2.600v3.800H6.200z" fill="#ccc"/></g></svg></div><div><svg width="14" height="14" viewBox="0 0 14 14"><g fill="none" stroke="#f2f2f2" stroke-width="1.300" stroke-linejoin="round" stroke-linecap="round"><path d="M6 2.200H3A1.300 1.300 0 0 0 1.700 3.500v7.500A1.300 1.300 0 0 0 3 12.300h7.500a1.300 1.300 0 0 0 1.300-1.300V8"/><path d="M10.500 1.500l2 2-5.300 5.300-2.500.5.500-2.500z"/></g></svg></div></div></div>
<div class="hl"></div>
<div class="ta"><div class="ph">Enter your modification details... (Press Enter to send, Shift+Enter for new line)</div><div class="wb"><span>WorkFlow Self-Evolution</span></div></div>
<div class="cl"><svg style="position:absolute;left:8px;top:8px" width="12" height="12" viewBox="0 0 12 12"><path d="M1.800 1.800l8.400 8.400M10.200 1.800l-8.400 8.400" stroke="#f0f0f0" stroke-width="1.300" stroke-linecap="round" fill="none"/></svg></div>
</div>
<!-- RP-END -->
</body>
</html>
